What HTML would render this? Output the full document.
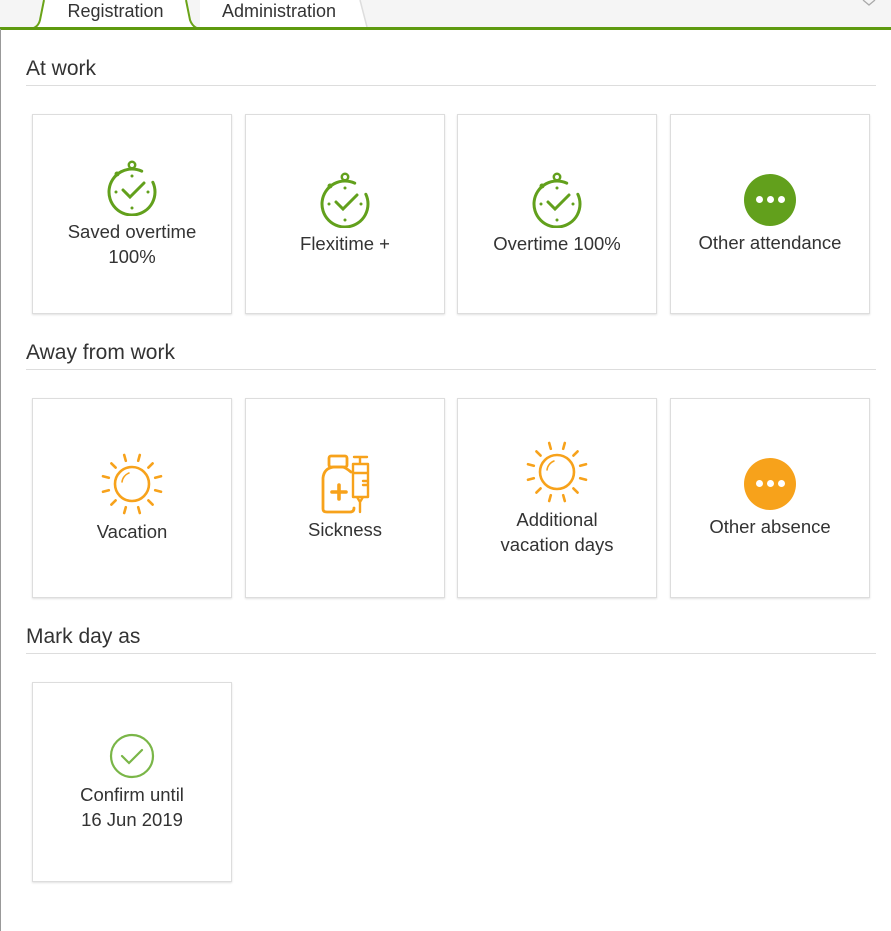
<!DOCTYPE html>
<html><head><meta charset="utf-8"><style>
*{box-sizing:border-box;margin:0;padding:0}
body{width:891px;height:931px;background:#fff;font-family:"Liberation Sans",sans-serif;color:#333;position:relative;overflow:hidden}
.lb{position:absolute;left:0;top:29px;width:1px;height:902px;background:#999}
.bar{position:absolute;left:0;top:0;width:891px;height:27px;background:#f5f5f5}
.gl{position:absolute;left:0;top:27px;width:891px;height:3px;background:#5e9a0f}
.tab{position:absolute;top:-2px;height:30px;font-size:18px;text-align:center;line-height:26px}
h2{position:absolute;left:26px;font-weight:normal;font-size:21px;color:#333}
.hl{position:absolute;left:26px;width:850px;height:1px;background:#ddd}
.t{position:absolute;width:200px;height:200px;border:1px solid #ddd;box-shadow:0 1px 2px rgba(0,0,0,.12);display:flex;flex-direction:column;align-items:center;justify-content:center;text-align:center;font-size:18.5px;line-height:25px}
.t svg{display:block;margin-bottom:3px}
.dots{width:52px;height:52px;border-radius:50%;display:flex;align-items:center;justify-content:center;gap:4px;margin-bottom:4px}
.dots i{width:7px;height:7px;border-radius:50%;background:#fff;display:block}
</style></head><body>
<div class="bar"></div>
<svg style="position:absolute;left:0;top:0" width="891" height="30">
<path d="M30 29 Q38 28 40 20 L44 0 L186 0 L190 20 Q193 28 200 29 Z" fill="#fff"/>
<path d="M30 29 Q38 28 40 20 L44 0 M186 0 L190 20 Q193 28 200 29" fill="none" stroke="#6aa318" stroke-width="2"/>
<path d="M200 28 L200 0 L360 0 L367 27 Z" fill="#fff"/>
<path d="M360 0 L367 27" stroke="#ddd" stroke-width="1.5"/>
<path d="M863 0 L869 5 L875 0" stroke="#aaa" stroke-width="1.3" fill="none"/>
</svg>
<div class="tab" style="left:45px;width:141px">Registration</div>
<div class="tab" style="left:200px;width:158px">Administration</div>
<div class="gl"></div>
<div class="lb"></div>

<h2 style="top:57px">At work</h2><div class="hl" style="top:85px"></div>
<h2 style="top:341px">Away from work</h2><div class="hl" style="top:369px"></div>
<h2 style="top:625px">Mark day as</h2><div class="hl" style="top:653px"></div>

<svg width="0" height="0" style="position:absolute"><defs>
<g id="sw" fill="none" stroke="#62a01c" stroke-width="3" stroke-linecap="round">
<path d="M46.85 22.28 A23 23 0 1 1 35.72 11.15"/>
<circle cx="26" cy="5" r="3.2" stroke-width="2.5"/><path d="M26 8.5 V9"/>
<polyline points="17,30 24,37 38,23"/>
<g fill="#62a01c" stroke="none"><circle cx="11" cy="14" r="2.5"/><circle cx="26" cy="16" r="1.5"/><circle cx="10" cy="32" r="1.5"/><circle cx="42" cy="32" r="1.5"/><circle cx="26" cy="48" r="1.5"/></g>
</g>
<g id="sun" fill="none" stroke="#f7a21b" stroke-width="2.6" stroke-linecap="round">
<circle cx="32" cy="32" r="17"/>
<path d="M22 30 A11 11 0 0 1 29 21" stroke-width="1.5"/>
<path d="M38.2 8.8L39.8 3.0M48.4 15.6L52.6 11.4M55.2 25.8L61 24.2M55.2 38.2L61 39.8M48.4 48.4L52.6 52.6M38.2 55.2L39.8 61M25.8 55.2L24.2 61M15.6 48.4L11.4 52.6M8.8 38.2L3 39.8M8.8 25.8L3 24.2M15.6 15.6L11.4 11.4M25.8 8.8L24.2 3"/>
</g>
</defs></svg>

<div class="t" style="left:32px;top:114px"><svg width="52" height="56" viewBox="0 0 52 56"><use href="#sw"/></svg>Saved overtime<br>100%</div>
<div class="t" style="left:245px;top:114px"><svg width="52" height="56" viewBox="0 0 52 56"><use href="#sw"/></svg>Flexitime +</div>
<div class="t" style="left:457px;top:114px"><svg width="52" height="56" viewBox="0 0 52 56"><use href="#sw"/></svg>Overtime 100%</div>
<div class="t" style="left:670px;top:114px"><div class="dots" style="background:#62a01c"><i></i><i></i><i></i></div>Other attendance</div>

<div class="t" style="left:32px;top:398px"><svg width="64" height="64" viewBox="0 0 64 64"><use href="#sun"/></svg>Vacation</div>
<div class="t" style="left:245px;top:398px"><svg width="62" height="60" viewBox="8 4 54 60" fill="none" stroke="#f7a21b" stroke-width="2.8" stroke-linejoin="round" stroke-linecap="round">
<rect x="19" y="6" width="18" height="11" rx="2"/>
<path d="M41 22 Q35 17 32 17 H24 Q14 18 13 28 V59 Q13 62 17 62 H40 Q44 62 44 58"/>
<path d="M29 35 V49 M22 42 H36" stroke-width="3.6"/>
<path d="M44 7 H57 M50 7 V14 M43 14 H58 V47 H43 Z M43 23 H58 M53 31 H58 M53 35 H58 M47 47 L50 52 L53 47 M50 52 V62" stroke-width="2.4"/>
</svg>Sickness</div>
<div class="t" style="left:457px;top:398px"><svg width="64" height="64" viewBox="0 0 64 64"><use href="#sun"/></svg>Additional<br>vacation days</div>
<div class="t" style="left:670px;top:398px"><div class="dots" style="background:#f7a21b"><i></i><i></i><i></i></div>Other absence</div>

<div class="t" style="left:32px;top:682px"><svg width="46" height="46" viewBox="0 0 46 46" fill="none" stroke="#7ab648" stroke-width="2.2"><circle cx="23" cy="23" r="21"/><polyline points="13,23 20,30 33,17" stroke-linecap="round"/></svg>Confirm until<br>16 Jun 2019</div>
</body></html>
